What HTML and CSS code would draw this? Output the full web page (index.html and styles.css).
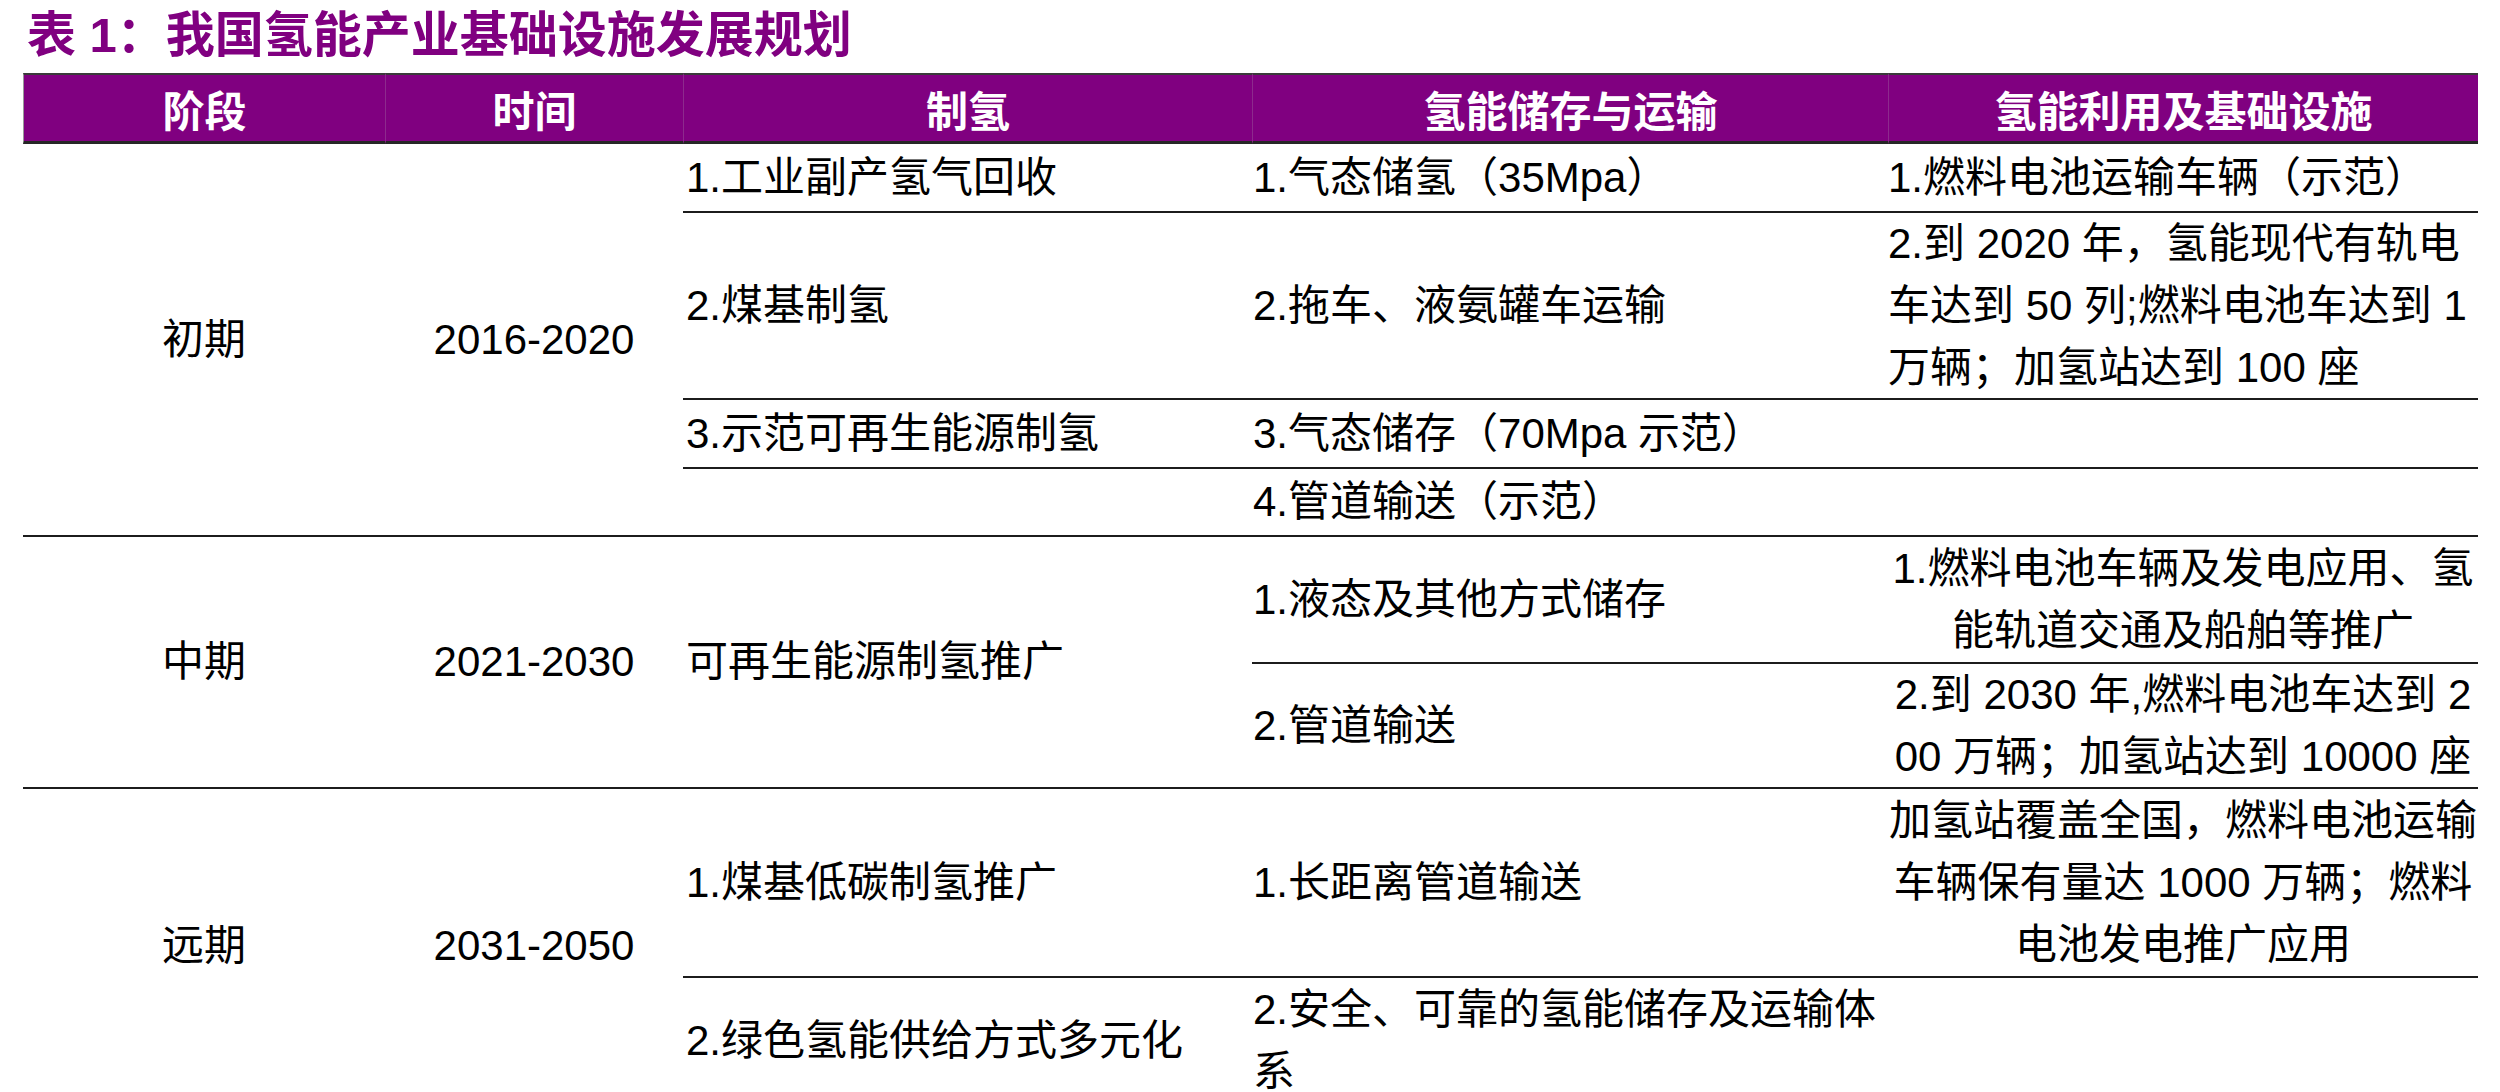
FILE: index.html
```html
<!DOCTYPE html>
<html lang="zh-CN">
<head>
<meta charset="utf-8">
<title>表 1：我国氢能产业基础设施发展规划</title>
<link rel="stylesheet" href="styles.css">
</head>
<body>
<div class="page">
  <h1 class="title">表 1：我国氢能产业基础设施发展规划</h1>
  <div class="table">
    <div class="th">阶段</div>
    <div class="th">时间</div>
    <div class="th">制氢</div>
    <div class="th">氢能储存与运输</div>
    <div class="th">氢能利用及基础设施</div>

    <div class="cell center span4 group-end">初期</div>
    <div class="cell center num span4 group-end">2016-2020</div>
    <div class="cell left c3">1.工业副产氢气回收</div>
    <div class="cell left c4">1.气态储氢（35Mpa）</div>
    <div class="cell left c5">1.燃料电池运输车辆（示范）</div>
    <div class="cell left c3">2.煤基制氢</div>
    <div class="cell left c4">2.拖车、液氨罐车运输</div>
    <div class="cell left c5">2.到 2020 年，氢能现代有轨电<br>车达到 50 列;燃料电池车达到 1<br>万辆；加氢站达到 100 座</div>
    <div class="cell left c3">3.示范可再生能源制氢</div>
    <div class="cell left c4">3.气态储存（70Mpa 示范）</div>
    <div class="cell left c5"></div>
    <div class="cell left c3"></div>
    <div class="cell left c4">4.管道输送（示范）</div>
    <div class="cell left c5"></div>

    <div class="cell center span2">中期</div>
    <div class="cell center num span2">2021-2030</div>
    <div class="cell left c3 span2">可再生能源制氢推广</div>
    <div class="cell left c4">1.液态及其他方式储存</div>
    <div class="cell center c5">1.燃料电池车辆及发电应用、氢<br>能轨道交通及船舶等推广</div>
    <div class="cell left c4">2.管道输送</div>
    <div class="cell center c5">2.到 2030 年,燃料电池车达到 2<br>00 万辆；加氢站达到 10000 座</div>

    <div class="cell center span2 open">远期</div>
    <div class="cell center num span2 open">2031-2050</div>
    <div class="cell left c3">1.煤基低碳制氢推广</div>
    <div class="cell left c4">1.长距离管道输送</div>
    <div class="cell center c5">加氢站覆盖全国，燃料电池运输<br>车辆保有量达 1000 万辆；燃料<br>电池发电推广应用</div>
    <div class="cell left c3 open">2.绿色氢能供给方式多元化</div>
    <div class="cell left c4 open">2.安全、可靠的氢能储存及运输体<br>系</div>
    <div class="cell left c5 open"></div>
  </div>
</div>
</body>
</html>
```

FILE: styles.css
```css
html, body {
  margin: 0;
  padding: 0;
  background: #ffffff;
  overflow: hidden;
}

.page {
  width: 2500px;
  height: 1092px;
  padding: 0 22px 0 23px;
  box-sizing: border-box;
  font-family: "Liberation Sans", "Noto Sans CJK SC", sans-serif;
  color: #000000;
}

.title {
  margin: 0;
  height: 73px;
  padding-left: 4px;
  font-size: 49px;
  line-height: 70px;
  font-weight: 700;
  color: #800080;
  white-space: nowrap;
}

.table {
  display: grid;
  grid-template-columns: 362px 298px 569px 636px 590px;
  grid-template-rows: 71px 69px 187px 69px 68px 127px 125px 189px 125px;
}

.th {
  background: #800080;
  color: #ffffff;
  font-size: 42px;
  font-weight: 700;
  display: flex;
  align-items: center;
  justify-content: center;
  border-top: 2px solid #3a3a3a;
  border-bottom: 3px solid #262626;
  border-left: 1px solid #8d2a8d;
  box-sizing: border-box;
  white-space: nowrap;
}

.th:first-child {
  border-left: 1px solid #9a9a9a;
}

.cell {
  font-size: 42px;
  line-height: 62px;
  display: flex;
  align-items: center;
  border-bottom: 2px solid #1c1c1c;
  box-sizing: border-box;
  white-space: nowrap;
}

.cell.open {
  border-bottom: none;
}

.center {
  justify-content: center;
  text-align: center;
}

.left {
  justify-content: flex-start;
  text-align: left;
}

.c3 {
  padding-left: 3px;
}

.c4 {
  padding-left: 1px;
}

.c5.left {
  padding-left: 0;
}

.span4 {
  grid-row: span 4;
}

.span2 {
  grid-row: span 2;
}
```
